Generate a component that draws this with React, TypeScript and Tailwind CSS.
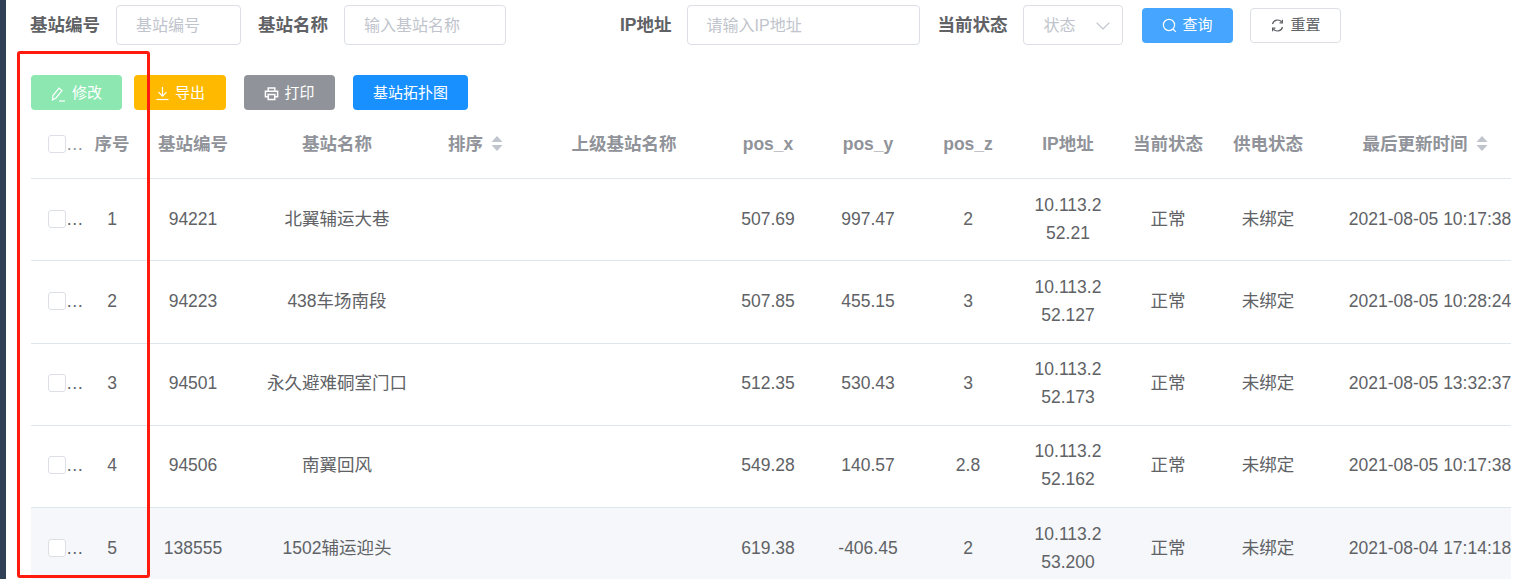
import React from 'react';
import { ChevronDown } from 'lucide-react';

const rows = [
  { no: 1, code: '94221', name: '北翼辅运大巷', x: '507.69', y: '997.47', z: '2', ip: '10.113.252.21', time: '2021-08-05 10:17:38' },
  { no: 2, code: '94223', name: '438车场南段', x: '507.85', y: '455.15', z: '3', ip: '10.113.252.127', time: '2021-08-05 10:28:24' },
  { no: 3, code: '94501', name: '永久避难硐室门口', x: '512.35', y: '530.43', z: '3', ip: '10.113.252.173', time: '2021-08-05 13:32:37' },
  { no: 4, code: '94506', name: '南翼回风', x: '549.28', y: '140.57', z: '2.8', ip: '10.113.252.162', time: '2021-08-05 10:17:38' },
  { no: 5, code: '138555', name: '1502辅运迎头', x: '619.38', y: '-406.45', z: '2', ip: '10.113.253.200', time: '2021-08-04 17:14:18' },
];

const Caret = () => (
  <svg width="12" height="17" viewBox="0 0 12 17" className="ml-[8px] inline-block align-[-2px]">
    <path d="M6 1 L11.5 7 H0.5 Z" fill="#c0c4cc" />
    <path d="M6 16 L11.5 10 H0.5 Z" fill="#c0c4cc" />
  </svg>
);

const EditIcon = () => (
  <svg width="16" height="16" viewBox="0 0 16 16" fill="none" stroke="currentColor" strokeWidth="1.2">
    <path d="M1.5 14 L2 9.5 L8 2.2 L11 4.6 L5 12 Z" />
    <path d="M8 15 H14" />
  </svg>
);

const DownloadIcon = () => (
  <svg width="15" height="15" viewBox="0 0 15 15" fill="none" stroke="currentColor" strokeWidth="1.2">
    <path d="M7.5 1 V10" />
    <path d="M3.5 6.2 L7.5 10.2 L11.5 6.2" />
    <path d="M1.5 13.5 H13.5" />
  </svg>
);

const PrintIcon = () => (
  <svg width="15" height="15" viewBox="0 0 16 16" fill="none" stroke="currentColor" strokeWidth="1.6">
    <path d="M4.5 5 V2 H11.5 V5" />
    <path d="M4.5 11.5 H1.5 V5.5 H14.5 V11.5 H11.5" />
    <path d="M4.5 9 H11.5 V14.5 H4.5 Z" />
  </svg>
);

const SearchIcon = () => (
  <svg width="15" height="15" viewBox="0 0 15 15" fill="none" stroke="currentColor" strokeWidth="1.2">
    <circle cx="7" cy="7" r="5.6" />
    <path d="M11 11 L13.8 13.8" />
  </svg>
);

const RefreshIcon = () => (
  <svg width="15" height="15" viewBox="0 0 15 15" fill="none" stroke="currentColor" strokeWidth="1.2">
    <path d="M2.5 6 A5.2 5.2 0 0 1 11.8 4.2" />
    <path d="M12.5 9 A5.2 5.2 0 0 1 3.2 10.8" />
    <path d="M12.4 1.8 V4.8 H9.6" />
    <path d="M2.6 13.2 V10.2 H5.4" />
  </svg>
);

const Checkbox = () => (
  <span className="inline-block h-[18px] w-[18px] shrink-0 rounded-[3px] border border-[#dcdfe6] bg-white" />
);

const th = 'border-b border-[#dfe6ec] p-0 text-center align-middle font-bold text-[#909399]';
const td = 'border-b border-[#dfe6ec] px-0 pt-0 pb-[2px] text-center align-middle';

export default function App() {
  return (
    <div className="relative flex h-[579px] w-[1513px] overflow-hidden bg-white text-[17.5px] text-[#606266] [font-family:'Liberation_Sans','Noto_Sans_CJK_SC',sans-serif]">
      <div className="w-[6px] shrink-0 bg-[#304156]" />
      <div className="min-w-0 flex-1 pl-[25px] pr-[2px] pt-[5px]">
        <div className="flex h-[40px] items-center">
          <label className="-ml-[1px] font-bold">基站编号</label>
          <div className="ml-[16px] flex h-[40px] w-[125px] items-center rounded-[4px] border border-[#dcdfe6] pl-[19px] pt-[2px] text-[16px] text-[#c0c4cc]">基站编号</div>
          <label className="ml-[17px] font-bold">基站名称</label>
          <div className="ml-[16px] flex h-[40px] w-[162px] items-center rounded-[4px] border border-[#dcdfe6] pl-[19px] pt-[2px] text-[16px] text-[#c0c4cc]">输入基站名称</div>
          <label className="ml-[114px] font-bold">IP地址</label>
          <div className="ml-[15px] flex h-[40px] w-[233px] items-center rounded-[4px] border border-[#dcdfe6] pl-[19px] pt-[2px] text-[16px] text-[#c0c4cc]">请输入IP地址</div>
          <label className="ml-[18px] font-bold">当前状态</label>
          <div className="ml-[15px] flex h-[40px] w-[100px] items-center justify-between rounded-[4px] border border-[#dcdfe6] pl-[20px] pr-[7px] pt-[2px] text-[16px] text-[#c0c4cc]">
            状态
            <ChevronDown size={24} strokeWidth={1.1} />
          </div>
          <button className="ml-[19px] flex h-[35px] w-[91px] items-center justify-center gap-[6px] rounded-[4px] bg-[#46a6ff] pt-[1px] text-[15px] text-white">
            <SearchIcon />
            查询
          </button>
          <button className="ml-[17px] flex h-[35px] w-[91px] items-center justify-center gap-[6px] rounded-[4px] border border-[#dcdfe6] bg-white pt-[1px] text-[15px] text-[#606266]">
            <RefreshIcon />
            重置
          </button>
        </div>

        <div className="mt-[30px] flex h-[35px] items-center text-[15px] text-white">
          <button className="flex h-[35px] w-[91px] items-center justify-center gap-[5px] rounded-[4px] bg-[#8ce7b1] pt-[2px]">
            <EditIcon />
            修改
          </button>
          <button className="ml-[12px] flex h-[35px] w-[92px] items-center justify-center gap-[5px] rounded-[4px] bg-[#ffba00] pt-[2px]">
            <DownloadIcon />
            导出
          </button>
          <button className="ml-[18px] flex h-[35px] w-[91px] items-center justify-center gap-[5px] rounded-[4px] bg-[#909399] pt-[2px]">
            <PrintIcon />
            打印
          </button>
          <button className="ml-[18px] flex h-[35px] w-[115px] items-center justify-center rounded-[4px] bg-[#1890ff] pt-[2px]">基站拓扑图</button>
        </div>

        <div className="w-[1480px] overflow-hidden">
          <table className="w-[1511px] table-fixed border-separate border-spacing-0 leading-[28px]">
            <colgroup>
              <col className="w-[41px]" />
              <col className="w-[81px]" />
              <col className="w-[80px]" />
              <col className="w-[208px]" />
              <col className="w-[89px]" />
              <col className="w-[188px]" />
              <col className="w-[100px]" />
              <col className="w-[100px]" />
              <col className="w-[100px]" />
              <col className="w-[100px]" />
              <col className="w-[100px]" />
              <col className="w-[100px]" />
              <col className="w-[224px]" />
            </colgroup>
            <thead>
              <tr className="h-[69px]">
                <th className={th}>
                  <div className="flex items-center pl-[17px] font-normal">
                    <Checkbox />
                    <span className="text-[#909399]">…</span>
                  </div>
                </th>
                <th className={th}>
                  <div className="pr-[1px]">序号</div>
                </th>
                <th className={th}>基站编号</th>
                <th className={th}>基站名称</th>
                <th className={th}>
                  <div className="pr-[20px]">
                    排序
                    <Caret />
                  </div>
                </th>
                <th className={th}>上级基站名称</th>
                <th className={th}>pos_x</th>
                <th className={th}>pos_y</th>
                <th className={th}>pos_z</th>
                <th className={th}>IP地址</th>
                <th className={th}>当前状态</th>
                <th className={th}>供电状态</th>
                <th className={th}>
                  <div className="pr-[10px]">
                    最后更新时间
                    <Caret />
                  </div>
                </th>
              </tr>
            </thead>
            <tbody>
              {rows.map((row) => (
                <tr key={row.no} className={row.no === 5 ? 'h-[82.25px] bg-[#f5f7fa]' : 'h-[82.25px]'}>
                  <td className={td}>
                    <div className="flex items-center pl-[17px]">
                      <Checkbox />
                      <span>…</span>
                    </div>
                  </td>
                  <td className={td}>
                    <div className="pr-[1px]">{row.no}</div>
                  </td>
                  <td className={td}>{row.code}</td>
                  <td className={td}>{row.name}</td>
                  <td className={td} />
                  <td className={td} />
                  <td className={td}>{row.x}</td>
                  <td className={td}>{row.y}</td>
                  <td className={td}>{row.z}</td>
                  <td className={td}>
                    <div className="break-all px-[12px]">{row.ip}</div>
                  </td>
                  <td className={td}>正常</td>
                  <td className={td}>未绑定</td>
                  <td className={td}>{row.time}</td>
                </tr>
              ))}
            </tbody>
          </table>
        </div>
      </div>
      <div className="absolute left-[17px] top-[51px] h-[527px] w-[133px] rounded-[3px] border-[3px] border-[#ff1c0e]" />
    </div>
  );
}
